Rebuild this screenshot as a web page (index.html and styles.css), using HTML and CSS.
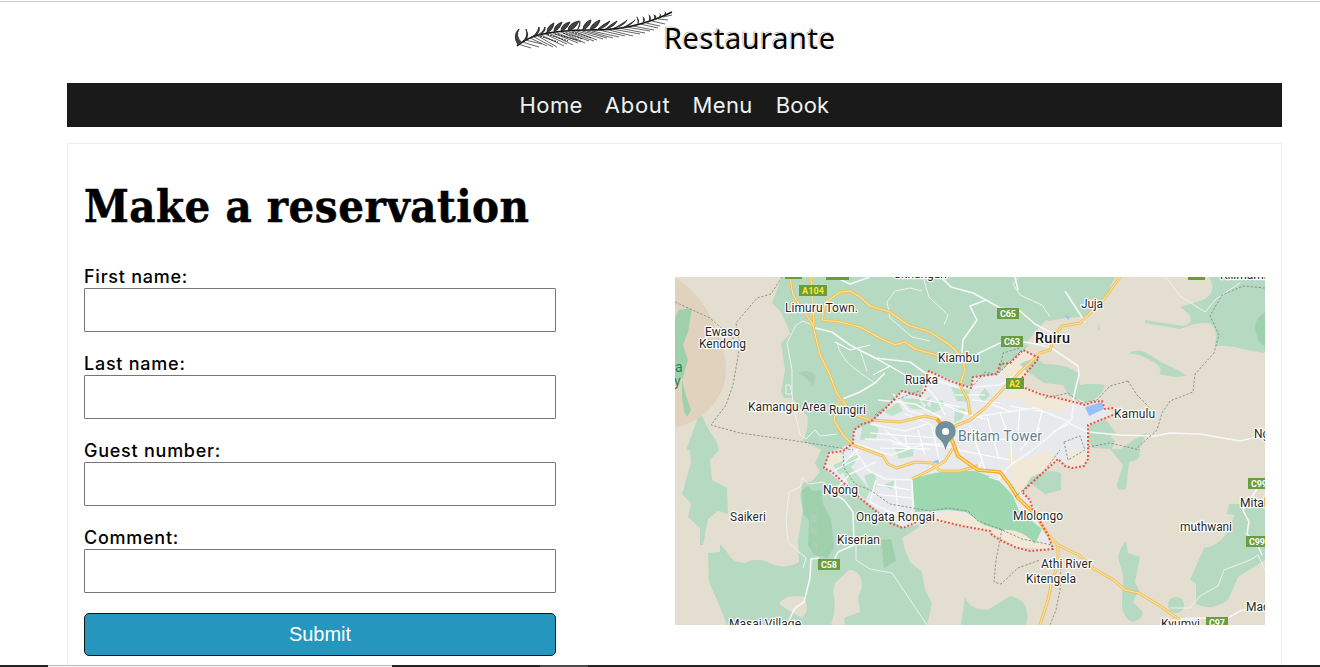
FILE: index.html
```html
<!DOCTYPE html>
<html lang="en">
<head>
<meta charset="utf-8">
<title>Restaurante</title>
<link rel="stylesheet" href="styles.css">
</head>
<body>
<div class="page">
<header class="header">
  <svg class="logo" viewBox="508 6 334 50" role="img" aria-label="Restaurante">
    <path class="stem" d="M517 46Q525 39 538 35Q560 30 590 30T640 24Q658 19 672 12"/>
    <path class="leaf" d="M518 45Q512 35 519 29Q515 36 521 42M522 42Q529 37 526 29Q530 38 524 41M530 38Q537 35 539 27Q541 34 532 37M536 36Q543 33 545 27Q546 33 537 36M546 33Q553 31 554 23Q547 26 547 32M554 32Q560 29 562 22Q554 25 554 31M561 32Q568 28 570 22Q561 24 561 31M569 31Q576 28 579 21Q569 23 568 30M577 31Q581 25 580 21M583 30Q590 27 591 20Q584 22 583 29M590 30Q598 28 600 20Q592 23 590 29M597 30Q607 27 610 21Q602 25 598 29M606 29Q615 26 617 21Q610 25 607 28M614 28Q624 26 627 20M622 28Q632 25 635 20M638 24Q640 21 637 17M643 23Q646 20 643 17M649 22Q652 18 649 15M654 20Q658 16 654 15M659 18Q662 15 660 14M664 16Q667 13 665 12"/>
    <path class="frond" d="M518 44L531 48M522 42L539 47M525 40L542 44M530 38L547 46M534 37L553 47M538 36L557 47M541 35L564 46M545 34L567 44M549 33L573 45M553 33L578 43M557 33L581 42M561 32L585 43M565 32L589 41M569 32L594 41M573 31L597 40M577 31L603 39M582 31L607 38M587 31L613 38M592 31L619 37M599 30L625 36M605 29L633 36M612 29L640 34M619 28L645 33M626 27L650 31M633 26L654 30M640 24L658 28M646 23L660 26M652 21L665 24M658 19L668 20M663 17L672 15"/>
    <path class="vein" d="M540 36L558 42M547 34L568 41M555 34L577 40M563 33L583 39M572 32L592 38"/>
    <text class="wordmark shade" x="662.7" y="48" textLength="171">Restaurante</text>
    <text class="wordmark" x="664" y="48.5" textLength="171">Restaurante</text>
  </svg>
</header>
<nav class="nav"><a class="home">Home</a><a class="about">About</a><a class="menu">Menu</a><a class="book">Book</a></nav>
<main class="card">
  <h1 class="title"><span>Make a reservation</span></h1>
  <div class="columns">
    <form class="form">
      <label class="field"><span>First name:</span><input type="text"></label>
      <label class="field"><span>Last name:</span><input type="text"></label>
      <label class="field"><span>Guest number:</span><input type="text"></label>
      <label class="field"><span>Comment:</span><input type="text"></label>
      <button class="submit" type="button">Submit</button>
    </form>
    <svg class="map" viewBox="675 277 590 348">
      <!-- land cover -->
      <path class="green" d="M782 277L772 303 781 312 787 325 790 334 781 343 785 370 781 392 784 398 792 398 799 407 808 417 807 430 803 441 821 450 815 463 820 472 812 481 803 483 800 495 803 510 798 540 799 562Q786 570 772 564Q758 556 745 563Q732 563 727 552L720 544 720 552 708 553 709 582 718 602 727 625H927L932 603 925 590 922 572 910 562 905 550 902 538 918 528 1000 420 1025 350 1045 322 1065 318 1080 317 1100 331 1097 315 1115 277Z"/>
      <path class="green" d="M700 412L709 430 717 442 719 450 710 460 712 480 727 488 728 514 718 511 708 519 703 545 700 545 700 528 688 517 691 503 681 493 684 485 690 460 687 448Z"/>
      <path class="green" d="M1209 277Q1218 292 1203 300L1180 307Q1200 320 1183 326L1145 320V323L1180 329Q1202 320 1211 324Q1218 330 1215 346Q1230 345 1242 349L1265 353V277Z"/>
      <path class="green" d="M1127 354Q1139 347 1150 355T1174 368L1187 376 1175 377 1159 374Q1165 368 1150 360T1127 354Z"/>
      <path class="green" d="M1110 449L1138 449Q1144 460 1129 462L1126 489Q1117 492 1117 484L1123 465Z"/>
      <path class="green" d="M1126 541Q1120 547 1118 557L1123 575 1122 605Q1123 619 1133 622Q1146 617 1141 610L1133 602Q1135 598 1139 590L1135 582 1140 557 1128 553Z"/>
      <path class="green" d="M1229 504H1265V560L1238 577 1228 600Q1210 612 1196 604L1196 583 1190 580 1204 548Q1218 546 1226 534L1235 515 1227 514Z"/>
      <path class="green" d="M1065 369L1078 372 1080 385Q1095 383 1105 385Q1103 395 1090 402L1073 396 1066 388Z"/>
      <ellipse class="green" cx="1176" cy="605" rx="8" ry="8"/>
      <path class="green" d="M965 596Q968 610 988 610L1010 596Q1032 600 1026 625H961Z"/>
      <path class="park" d="M1265 312Q1251 321 1257 336Q1258 343 1265 346Z"/>
      <path class="tan" d="M675 278Q706 296 720 340Q731 370 722 390Q708 420 675 428Z"/>
      <path class="park" d="M692 308L679 310 675 318V382L682 378 682 396 684 411 687 417 691 410 686 396 682 380 688 360 683 345 688 332Z"/>
      <path class="land" d="M675 450H690L691 463 682 494 688 507 684 518 675 515ZM835 583L849 570Q862 570 862 587L858 597 860 612 844 618 845 625H831Q837 608 833 591ZM779 604Q786 593 804 597Q811 610 802 618L790 611ZM1024 345L1046 320Q1058 325 1080 321L1100 303 1098 333 1070 340Z"/>
      <path class="park" d="M802 490L808 486 813 491 821 490 823 504 831 519 834 547 827 558 814 555 808 545 809 520 803 514ZM881 540L891 539 896 561 884 568Z"/>
      <path class="dark" d="M798 373Q810 368 816 376L813 386Q808 378 798 373Z"/>
      <path class="hill" d="M810 515H817V523H811ZM811 527L818 529 816 537 810 532ZM812 540L818 544 817 552Z"/>

      <!-- urban area -->
      <path class="city" d="M870 424L885 409 902 391 920 396 929 371 971 388 973 377 997 374 1010 363 1023 350 1039 358 1022 378 1025 388 1085 405 1102 401 1113 414 1088 425V460L1072 468 1058 459 1022 492 1030 500 1053 549 1015 547 990 531 937 520 903 528 860 498 824 468 829 453 853 443 854 430Z"/>
      <path class="sand" d="M1020 351L1039 358 1022 378 1027 389 1070 401 1067 412 1040 410 1018 400 1000 399 1012 391 1012 382 1000 374ZM1008 449L1022 461 1048 450 1058 459 1025 485 1020 500 1010 470ZM1067 450L1088 452 1083 467 1070 467ZM915 520L950 511 1000 524 1042 541 1053 549 1015 547 990 531 937 522ZM829 453L842 450 840 464 828 467Z"/>
      <path class="green" d="M1020 364Q1035 355 1044 364Q1063 364 1074 370V386Q1092 382 1100 388Q1100 397 1087 402L1069 396 1063 385 1044 383 1025 370ZM1022 493L1031 477Q1050 468 1061 473V490L1045 494 1030 483ZM1089 425L1106 420 1116 433 1101 443 1089 443ZM1090 440L1105 431 1115 441 1112 449 1092 448ZM1119 450Q1136 438 1147 432L1138 452Z"/>
      <path class="urban-green" d="M931 402L943 400 942 409 930 414ZM932 396L920 402 924 408ZM966 409L962 419 954 423 955 408ZM985 388L990 395 984 402 978 396ZM884 412L898 402 903 411 892 416ZM862 427L870 422 879 429 876 438 860 440ZM895 449L914 447 913 456 899 459ZM864 476L875 472 877 486 870 491ZM833 465L860 454 854 464 840 475ZM883 485L895 480 892 490ZM900 398L918 399 934 410 912 409ZM951 387L970 390 968 402 957 401ZM842 470L850 466 870 490 866 500 850 487Z"/>
      <path class="park forest" d="M912 479Q940 469 975 471L997 479 1007 489 1013 496 1019 511 1042 529 1035 544Q1022 528 1000 530L984 525 966 512 948 510 915 512Z"/>
      <path class="water" d="M1085 407L1102 402 1104 409 1089 416ZM932 462L940 459 938 464ZM1065 315L1070 317 1068 320Z"/>
      <path class="city" d="M1067 418H1077L1088 422 1098 417 1100 420 1088 425V445L1070 440Z"/>

      <!-- local roads -->
      <path class="road thin" d="M787 343L792 370V395L790 385H786V394H792L794 410 800 434 806 439 815 430 820 436 837 434M787 343L796 325 803 321 812 325M837 342Q840 358 855 369T875 383M867 371L860 350M887 302L895 291 910 288 922 291M887 302L890 318 912 337 930 341M923 277L929 297 948 315 944 325M1019 277L1013 284 1020 295 1042 305 1050 317M1166 277L1180 296 1205 312 1216 299 1240 283M803 568L806 558 788 542 786 520 789 492 800 487 802 477 808 484 824 482 828 490M870 569L892 573 927 625M870 569L856 560V545M1170 608H1190L1200 596 1218 586 1224 570 1250 560 1258 555M1258 555L1265 570"/>
      <path class="road" d="M815 328L832 332 850 345 875 358 910 362 935 380 960 388 1000 385 1020 372M840 400L860 392 875 383 885 373M870 277L850 284 835 277M941 277L951 287 973 293 986 300 1000 308 1020 311 1035 324 1052 333M1015 277L1018 290M986 300L970 306 977 320 963 340 962 353M977 354L1000 343 1025 342 1050 347 1078 366 1079 375 1074 395 1072 418 1068 423 1088 432 1120 435 1155 436 1170 433 1200 434 1240 441 1257 437M1010 406L1045 412 1068 421 1046 439 1030 452 1012 464 998 477M1045 412L1035 408 1000 413 970 418M1065 291L1085 322M855 450L868 470 885 479 912 480M912 480L913 509M853 443L890 455 925 444 960 449M876 480L870 502 890 512 920 519M828 490L844 500 853 512 854 545 838 552 834 560M819 558L811 559 810 578 804 602 795 608 789 620M885 430L904 446 925 450M870 424L905 431 930 423M865 439L890 440 910 448M905 414L930 424 943 438M920 380L937 399 945 415M1177 619L1204 618 1228 618 1240 611 1265 604M1247 504L1243 510 1249 522 1247 534 1257 544 1262 555M1243 510L1257 489M878 400L915 404 942 418M893 394L909 411 928 416M1052 347L1045 340M838 487L850 474 876 462"/>
      <path class="road street" d="M870 433L938 438M880 448L930 449M905 436L908 450M918 430L925 455M932 427L940 464M892 444L942 444M970 425L982 460 978 470M987 417L999 459M960 440L1008 439M958 450L1010 460M1000 413L1011 442 1012 464M974 438L986 472M988 403L1012 412M1020 408L1018 431M876 484L910 490M873 494L912 498M895 480L898 510M953 410L985 419M944 405L970 414M920 399L960 407M1040 428L1020 450M1053 432L1068 424M972 400L1000 403M955 395L985 395M1042 411L1036 435M859 458L835 470M860 447L842 465M989 477L998 480 1006 471M870 345L850 350 835 342M873 375L890 366 910 378M870 355L900 372"/>

      <!-- highways -->
      <g class="highway">
        <path id="r1" d="M790 277L793 295 803 310 813 325 820 355 830 375 837 394 844 402 852 414 870 420 900 422 925 416 937 419 950 435 958 456 978 470 1000 472 1010 485 1018 498 1035 514 1048 535 1058 545 1079 555 1093 568 1115 581 1125 590 1139 593 1160 606 1180 620"/>
        <path id="r2" d="M811 277L814 325M839 400L834 420 843 435 853 445 883 456 888 464 897 468 915 462 932 463 940 471 960 471 978 466M912 479L930 470 945 461 953 448M822 320L825 303 840 292 850 291 860 297 870 306 890 312 908 325 930 332 950 345 962 357 965 370 960 385 968 400 970 415M822 320L840 322 860 327 880 338 895 345 905 342 915 349 940 356"/>
        <path id="r3" d="M950 428L970 420 985 408 1005 387 1020 372 1040 353 1050 350 1055 335 1062 326 1080 323 1090 313 1105 298 1120 277M1058 545V565L1052 580 1048 600 1040 625"/>
      </g>
      <g class="highway-core"><use href="#r1"/><use href="#r2"/><use href="#r3"/></g>
      <path class="highway-main" d="M937 419L950 435 958 456 978 470 1000 472 1010 485 1018 498 1035 514"/>
      <path class="highway-core" d="M950 435L958 456 978 470 1000 472 1010 485 1018 498 1035 514"/>

      <!-- boundaries -->
      <path class="dash" d="M782 277L771 294 757 298 736 323 740 345 733 385 726 405 711 425 740 433 790 440 853 450M675 302L710 318 737 342M843 452L844 468 855 484 870 490M870 490L890 504 930 511 948 508 968 511 978 521 1000 529 1022 539 1052 545M1002 529L996 560 994 582 1001 584 1018 568 1040 560M1265 288L1243 286 1222 295 1210 316 1219 335 1214 353 1195 374 1193 392 1170 401 1162 413 1157 430 1137 448M1128 381L1137 395 1147 405 1156 419M1128 381L1110 386 1097 400 1081 403 1068 393 1045 398M1064 442L1080 436 1085 450 1068 460ZM1088 447L1110 443 1140 450M1000 370L1003 353 1020 348M971 388L985 372 997 375 1022 350M1061 568L1060 590 1056 610 1050 625M1015 497L1045 470 1060 450M875 415L895 400 919 391"/>
      <path class="border" d="M1022 378L1039 358 1023 350 1010 363 1000 364 997 374 973 377 971 388 950 381 929 371 925 390 920 396 902 391 885 409 870 422 862 424 854 430 853 443 843 451 829 453 824 468 832 472 860 498 890 523 903 528 915 523 937 520 962 526 990 531 992 535 1002 541 1015 547 1030 551 1053 549 1048 535 1033 510 1030 500 1022 492 1035 480 1058 459 1065 466 1072 468 1084 466 1088 459V425L1113 415M1025 388L1040 394 1070 401 1085 405 1093 402 1102 401 1105 409 1114 408"/>

      <!-- road shields -->
      <g class="shields">
        <rect x="785" y="274" width="17" height="5"/><rect x="826" y="274" width="23" height="6"/><rect x="1188" y="274" width="17" height="6"/>
        <rect x="799" y="285" width="28" height="11"/><rect x="997" y="308" width="22" height="11"/><rect x="1001" y="336" width="22" height="11"/><rect x="1006" y="378" width="18" height="11"/><rect x="818" y="559" width="22" height="11"/><rect x="1248" y="478" width="22" height="11"/><rect x="1246" y="536" width="22" height="11"/><rect x="1206" y="617" width="22" height="11"/>
      </g>
      <g class="shield-text">
        <text class="yellow" x="802" y="294" textLength="22">A104</text><text x="1000" y="317" textLength="16">C65</text><text x="1004" y="345" textLength="16">C63</text><text class="yellow" x="1009" y="387" textLength="11">A2</text><text x="821" y="568" textLength="16">C58</text><text x="1251" y="487" textLength="16">C99</text><text x="1249" y="545" textLength="16">C99</text><text x="1209" y="625.5" textLength="16">C97</text>
      </g>

      <!-- places -->
      <g class="places">
        <text x="785" y="312" textLength="73">Limuru Town.</text>
        <text x="705" y="336" textLength="35">Ewaso</text><text x="699" y="348" textLength="47">Kendong</text>
        <text x="748" y="411" textLength="78">Kamangu Area</text><text x="829" y="414" textLength="37">Rungiri</text>
        <text x="938" y="362" textLength="41">Kiambu</text><text x="905" y="384" textLength="33">Ruaka</text>
        <text x="1081" y="308" textLength="22">Juja</text><text x="1114" y="418" textLength="41">Kamulu</text>
        <text x="823" y="494" textLength="35">Ngong</text><text x="730" y="521" textLength="36">Saikeri</text>
        <text x="856" y="521" textLength="79">Ongata Rongai</text><text x="837" y="544" textLength="43">Kiserian</text>
        <text x="1013" y="520" textLength="50">Mlolongo</text><text x="1041" y="568" textLength="51">Athi River</text>
        <text x="1026" y="583" textLength="50">Kitengela</text><text x="1180" y="531" textLength="52">muthwani</text>
        <text x="1254" y="438">Ng</text><text x="1240" y="507">Mital</text><text x="1246" y="611">Mac</text>
        <text x="729" y="628" textLength="72">Masai Village</text><text x="1161" y="628" textLength="39">Kyumvi</text>
        <text x="1220" y="279">Kilimambo</text><text x="893" y="278" textLength="54">Githunguri</text>
        <text class="town" x="1035" y="343" textLength="35">Ruiru</text>
      </g>
      <text class="park-name" x="675" y="372">a</text><text class="park-name" x="674" y="386">y</text>
      <text class="landmark" x="958" y="441" textLength="84">Britam Tower</text>
      <path class="pin" d="M945.5 450Q943 441 938 438A10.2 10.2 0 1 1 953 438Q948 441 945.5 450Z"/><circle class="pin-hole" cx="945.5" cy="431.5" r="3.6"/>
    </svg>
  </div>
</main>
<div class="taskbar"><i class="dark-a"></i><i class="pale"></i><i class="dark-b"></i><i class="mid"></i><i class="rest"></i></div>
</div>
</body>
</html>
```
FILE: styles.css
```css
* { box-sizing: border-box; }
body { margin: 0; background: #fff; color: #000; font-family: Inter, "Liberation Sans", sans-serif; overflow: hidden; }
.page { height: 667px; padding: 1px 38px 0 67px; overflow: hidden; position: relative; }
.page::before { content: ""; display: block; height: 1px; margin: 0 -38px 0 -67px; background: #c9cbca; }
.header { height: 81px; padding: 4px 0 0 441px; }
.logo { display: block; width: 334px; height: 50px; overflow: visible; }
.stem { fill: none; stroke: #111; stroke-width: 1.5; }
.leaf { fill: #444; stroke: #222; stroke-width: .9; stroke-linecap: round; }
.frond { fill: none; stroke: #333; stroke-width: .75; }
.vein { fill: none; stroke: #222; stroke-width: 1.1; stroke-dasharray: 2 1; }
.wordmark { font: 29px "Noto Sans", sans-serif; fill: #000; }
.shade { fill: none; stroke: #999; stroke-width: .5px; }

.nav { height: 44px; background: #1a1a1a; color: #edf2f2; display: flex; justify-content: center; gap: 22px; font-size: 22px; line-height: 45px; }
.home { letter-spacing: .4px; }
.about { letter-spacing: .7px; }
.menu { letter-spacing: .4px; margin-right: 1px; }
.book { letter-spacing: .2px; }

.card { height: 560px; margin-top: 16px; border: 1px solid #eee; padding: 0 16px; }
.title { margin: 0; height: 121px; padding-top: 33px; font: bold 45px/60px "DejaVu Serif Condensed", "DejaVu Serif", serif; letter-spacing: .5px; white-space: nowrap; -webkit-text-stroke: .5px #000; }
.title span { display: inline-block; }
.columns { display: flex; gap: 119px; align-items: flex-start; }
.form { width: 472px; }
.field { display: block; height: 87px; font-size: 18px; font-weight: 500; letter-spacing: .75px; line-height: 23px; }
.field span { display: block; }
.field input { display: block; width: 472px; height: 44px; border: 1px solid #767676; border-radius: 1px; padding: 0; }
.submit { display: block; width: 472px; height: 43px; border: 1px solid #151515; border-radius: 5px; background: #2596be; color: #fff; font: 20px "Liberation Sans", sans-serif; padding: 0; }
.map { flex: none; width: 590px; height: 348px; margin-top: 12px; background: #e4ded0; overflow: hidden; }

.green { fill: #b6d9c2; }
.park { fill: #9ed0ac; }
.forest { fill: #9ed8b0; }
.tan { fill: #e0d2bc; }
.land { fill: #e4ded0; }
.dark, .hill { fill: #aacfb5; }
.city { fill: #e8e9ed; }
.sand { fill: #f1e8d7; }
.urban-green { fill: #bee2c9; }
.water { fill: #9ac0f8; }
.road, .highway, .highway-core, .highway-main, .dash, .border { fill: none; stroke-linejoin: round; }
.road { stroke: #f6f8f8; stroke-width: 1.6; }
.thin { stroke-width: 1; stroke: #edf2ed; }
.street { stroke-width: 1.1; stroke: #fff; }
.highway { stroke: #f0bf5a; stroke-width: 3; }
.highway-core { stroke: #fbe39f; stroke-width: 1.1; }
.highway-main { stroke: #f9ab1b; stroke-width: 3.6; }
.dash { stroke: #848986; stroke-width: .9; stroke-dasharray: 2.3 1.7; }
.border { stroke: #ed4b3c; stroke-width: 2; stroke-dasharray: 1.8 2; }
.shields { fill: #699d40; }
.shield-text { font: bold 9px Roboto, sans-serif; fill: #fff; }
.yellow { fill: #ffe52e; }
.places { font: 12px Roboto, sans-serif; fill: #262626; stroke: #fff; stroke-width: 2.4px; stroke-linejoin: round; paint-order: stroke; }
.town { font-size: 14.5px; font-weight: 500; fill: #111; }
.park-name { font: 14px Roboto, sans-serif; fill: #16854c; }
.landmark { font: 14px Roboto, sans-serif; fill: #62808f; stroke: #fff; stroke-width: 2px; paint-order: stroke; }
.pin { fill: #728f9c; }
.pin-hole { fill: #fff; }

.taskbar { position: absolute; left: 0; right: 0; bottom: 0; height: 2px; display: flex; }
.taskbar i { height: 2px; background: #262323; }
.dark-a { width: 48px; }
.taskbar .pale { width: 344px; background: #f3f3f3; border-top: 1px solid #bcbcbc; }
.dark-b { width: 148px; }
.taskbar .mid { width: 48px; background: #4c4a4a; }
.rest { flex: 1; }
```
